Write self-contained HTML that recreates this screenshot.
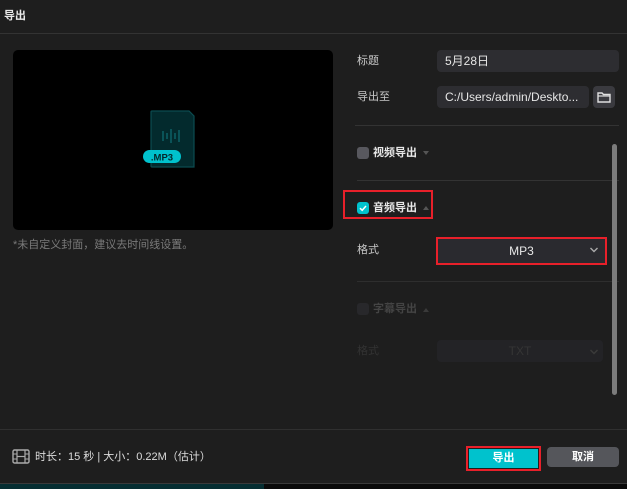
<!DOCTYPE html>
<html><head><meta charset="utf-8"><style>
*{margin:0;padding:0;box-sizing:border-box}
body{width:627px;height:489px;background:#1e1e1e;font-family:"Liberation Sans","Noto Sans CJK SC",sans-serif;color:#d8d8d8;position:relative;overflow:hidden;font-size:11px}
.a{position:absolute}
.lbl{color:#c8c8c8;font-size:11px;line-height:14px}
.inp{background:#2d2d31;border-radius:4px;color:#e6e6e6;font-size:12px;padding-left:8px;line-height:22px}
.sep{height:1px;background:#333}
.b{font-weight:bold;color:#e8e8e8}
</style></head><body>
<div class="a b" style="left:4px;top:9px;font-size:11px;line-height:14px">导出</div>
<div class="a" style="left:0;top:33px;width:627px;height:1px;background:#333"></div>
<div class="a" style="left:13px;top:50px;width:320px;height:180px;background:#000;border-radius:5px"></div>
<svg class="a" style="left:140px;top:105px" width="60" height="65" viewBox="0 0 60 65">
<path d="M12 6 H49 L54 11 V62 H12 Q11 62 11 61 V7 Q11 6 12 6Z" fill="#032a2d" stroke="#0b4b50" stroke-width="1.2"/>
<g stroke="#0e6a70" stroke-width="1.3"><line x1="23" y1="26" x2="23" y2="36"/><line x1="27" y1="28" x2="27" y2="34"/><line x1="31" y1="24" x2="31" y2="38"/><line x1="35" y1="28" x2="35" y2="34"/><line x1="39" y1="25" x2="39" y2="37"/></g>
<rect x="3" y="45" width="38" height="13" rx="6.5" fill="#00c2cd"/>
<text x="22" y="55.5" text-anchor="middle" font-family="Liberation Sans" font-weight="bold" font-size="9.5" fill="#04272a">.MP3</text>
</svg>
<div class="a" style="left:13px;top:238px;color:#7a7a7a;font-size:11px;line-height:14px">*未自定义封面，建议去时间线设置。</div>

<div class="a lbl" style="left:357px;top:54px">标题</div>
<div class="a inp" style="left:437px;top:50px;width:182px;height:22px">5月28日</div>
<div class="a lbl" style="left:357px;top:90px">导出至</div>
<div class="a inp" style="left:437px;top:86px;width:152px;height:22px;white-space:nowrap;overflow:hidden">C:/Users/admin/Deskto...</div>
<div class="a" style="left:593px;top:86px;width:22px;height:22px;background:#3a3a3f;border-radius:4px"></div>
<svg class="a" style="left:596px;top:90px" width="16" height="14" viewBox="0 0 16 14"><path d="M2 3 H6 L7.5 4.5 H14 V12 H2Z" fill="none" stroke="#e0e0e0" stroke-width="1.4"/><line x1="2" y1="6" x2="14" y2="6" stroke="#e0e0e0" stroke-width="1.2"/></svg>
<div class="a sep" style="left:355px;top:125px;width:264px"></div>

<div class="a" style="left:357px;top:147px;width:12px;height:12px;background:#58585e;border-radius:3px"></div>
<div class="a b" style="left:373px;top:146px;line-height:14px">视频导出</div>
<div class="a" style="left:423px;top:151px;border:3px solid transparent;border-top:4px solid #555;"></div>
<div class="a sep" style="left:357px;top:180px;width:262px"></div>

<div class="a" style="left:343px;top:190px;width:90px;height:29px;border:2px solid #e8202a"></div>
<div class="a" style="left:357px;top:202px;width:12px;height:12px;background:#00c2cd;border-radius:3px"></div>
<svg class="a" style="left:357px;top:202px" width="12" height="12"><path d="M3 6.2 L5.2 8.3 L9 4" fill="none" stroke="#fff" stroke-width="1.5"/></svg>
<div class="a b" style="left:373px;top:201px;line-height:14px">音频导出</div>
<div class="a" style="left:423px;top:203px;border:3px solid transparent;border-bottom:4px solid #555;"></div>

<div class="a lbl" style="left:357px;top:243px">格式</div>
<div class="a" style="left:436px;top:237px;width:171px;height:28px;border:2px solid #e8202a"></div>
<div class="a" style="left:438px;top:239px;width:167px;height:24px;background:#2a2a2f;text-align:center;line-height:24px;color:#e8e8e8;font-size:12px">MP3</div>
<svg class="a" style="left:589px;top:246px" width="10" height="8"><path d="M1.5 2 L5 5.5 L8.5 2" fill="none" stroke="#aaa" stroke-width="1.4"/></svg>
<div class="a sep" style="left:357px;top:281px;width:262px;background:#2e2e2e"></div>

<div class="a" style="left:357px;top:303px;width:12px;height:12px;background:#28282b;border-radius:3px"></div>
<div class="a" style="left:373px;top:302px;line-height:14px;color:#444;font-weight:bold">字幕导出</div>
<div class="a" style="left:423px;top:305px;border:3px solid transparent;border-bottom:4px solid #3a3a3a;"></div>
<div class="a" style="left:357px;top:344px;color:#333;line-height:14px">格式</div>
<div class="a" style="left:437px;top:340px;width:166px;height:22px;background:#232326;border-radius:4px;text-align:center;line-height:22px;color:#353535;font-size:12px">TXT</div>
<svg class="a" style="left:589px;top:348px" width="10" height="8"><path d="M1.5 2 L5 5.5 L8.5 2" fill="none" stroke="#3a3a3a" stroke-width="1.4"/></svg>

<div class="a" style="left:612px;top:144px;width:5px;height:251px;background:#7c7c7c;border-radius:3px"></div>

<div class="a" style="left:0;top:429px;width:627px;height:1px;background:#303030"></div>
<svg class="a" style="left:12px;top:449px" width="18" height="15" viewBox="0 0 18 15"><rect x="1" y="1" width="16" height="13" rx="1.5" fill="none" stroke="#aaa" stroke-width="1.4"/><line x1="5" y1="1" x2="5" y2="14" stroke="#aaa" stroke-width="1.2"/><line x1="13" y1="1" x2="13" y2="14" stroke="#aaa" stroke-width="1.2"/><line x1="5" y1="7.5" x2="13" y2="7.5" stroke="#aaa" stroke-width="1.2"/><line x1="1" y1="5" x2="5" y2="5" stroke="#aaa"/><line x1="1" y1="10" x2="5" y2="10" stroke="#aaa"/><line x1="13" y1="5" x2="17" y2="5" stroke="#aaa"/><line x1="13" y1="10" x2="17" y2="10" stroke="#aaa"/></svg>
<div class="a" style="left:35px;top:450px;line-height:14px;color:#dcdcdc">时长：15 秒 | 大小：0.22M（估计）</div>

<div class="a" style="left:466px;top:446px;width:75px;height:25px;border:2px solid #e8202a"></div>
<div class="a" style="left:469px;top:449px;width:69px;height:19px;background:#00c2cd;text-align:center;line-height:19px;color:#fff;font-weight:bold">导出</div>
<div class="a" style="left:547px;top:447px;width:72px;height:20px;background:#55565b;border-radius:4px;text-align:center;line-height:20px;color:#fff;font-weight:bold">取消</div>

<div class="a" style="left:0;top:483px;width:627px;height:1px;background:#3a3a3a"></div>
<div class="a" style="left:0;top:484px;width:627px;height:5px;background:#0a0a0a"></div>
<div class="a" style="left:0;top:484px;width:264px;height:5px;background:#062e32"></div>
</body></html>
